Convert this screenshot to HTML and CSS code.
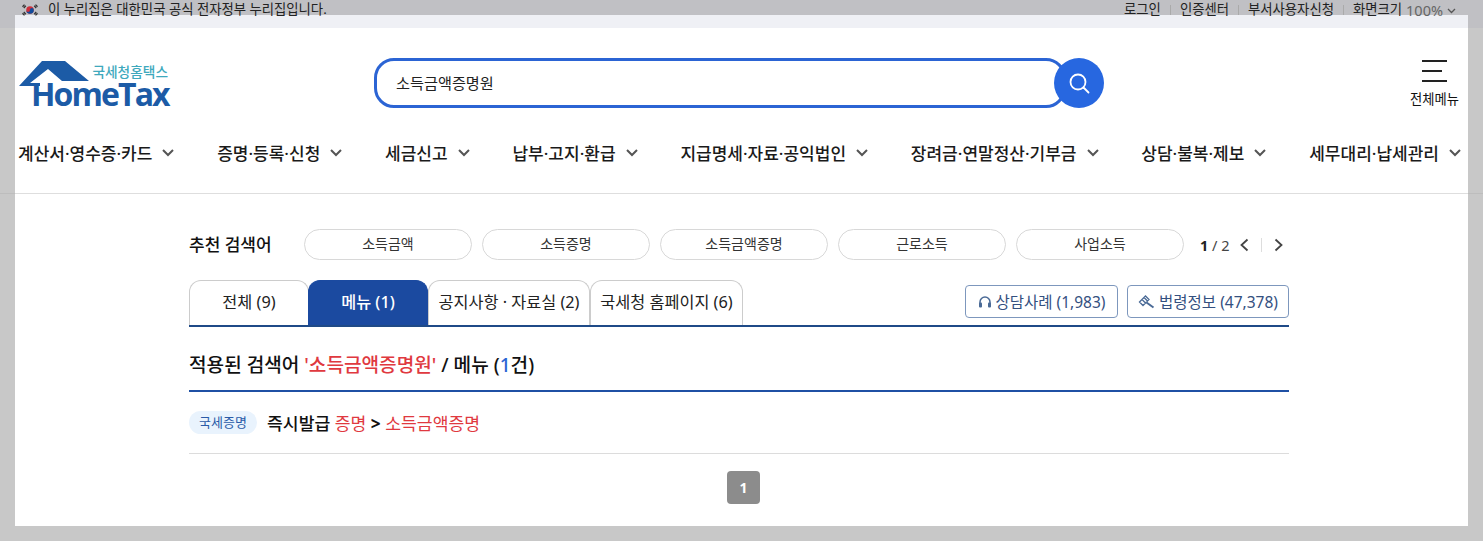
FILE: index.html
```html
<!DOCTYPE html>
<html lang="ko">
<head>
<meta charset="utf-8">
<title>HomeTax</title>
<link rel="stylesheet" href="styles.css">
</head>
<body>
<div class="gov">
  <div class="gov-left">
    <svg class="flag" width="20" height="14" viewBox="0 0 20 14"><circle cx="10" cy="7" r="3.800" fill="#cd2e3a"/><path d="M6.200 7a3.800 3.800 0 0 0 7.600 0 1.900 1.900 0 0 0-3.800 0 1.900 1.900 0 0 1-3.800 0z" fill="#0f4c9c"/><g stroke="#333" stroke-width="1.300"><path d="M2.500 3.800l2-2.200M3.800 5l2-2.200M14.200 2.800l2 2.200M15.500 1.600l2 2.200M2.500 10.200l2 2.200M3.800 9l2 2.200M14.200 11.200l2-2.200M15.500 12.400l2-2.200"/></g></svg>
    <span>이 누리집은 대한민국 공식 전자정부 누리집입니다.</span>
  </div>
  <div class="gov-right">
    <a class="gov-link">로그인</a><i class="gov-sep"></i>
    <a class="gov-link">인증센터</a><i class="gov-sep"></i>
    <a class="gov-link">부서사용자신청</a><i class="gov-sep"></i>
    <a class="gov-link">화면크기</a>
    <span class="zoom">100%<svg width="9" height="6" viewBox="0 0 9 6"><path d="M1 1l3.500 3.500L8 1" fill="none" stroke="#555" stroke-width="1.300"/></svg></span>
  </div>
</div>
<div class="window">
  <div class="strip"></div>
  <header class="head">
    <div class="logo">
      <svg class="roof" width="92" height="30" viewBox="0 0 92 30"><path d="M1 28L24 3H47L71 23H44L30 11 12 25H22V28Z" fill="#1c5ba6"/></svg>
      <span class="logo-kr">국세청홈택스</span>
      <span class="logo-en">HomeTax</span>
    </div>
    <div class="search">
      <div class="search-box">소득금액증명원</div>
      <button class="search-btn" aria-label="검색"><svg width="26" height="26" viewBox="0 0 26 26"><circle cx="12" cy="12" r="7.500" fill="none" stroke="#fff" stroke-width="1.800"/><path d="M17.500 17.500l5 5" stroke="#fff" stroke-width="1.800" stroke-linecap="round"/></svg></button>
    </div>
    <div class="all">
      <svg width="25" height="22" viewBox="0 0 25 22"><path d="M0 1h25M0 11h20M0 21h25" stroke="#222" stroke-width="2"/></svg>
      <span>전체메뉴</span>
    </div>
  </header>
  <nav class="nav">
    <a class="nav-item">계산서·영수증·카드<svg class="chev" width="12" height="8" viewBox="0 0 12 8"><path d="M1 1l5 5 5-5" fill="none" stroke="#555" stroke-width="2"/></svg></a>
    <a class="nav-item">증명·등록·신청<svg class="chev" width="12" height="8" viewBox="0 0 12 8"><path d="M1 1l5 5 5-5" fill="none" stroke="#555" stroke-width="2"/></svg></a>
    <a class="nav-item">세금신고<svg class="chev" width="12" height="8" viewBox="0 0 12 8"><path d="M1 1l5 5 5-5" fill="none" stroke="#555" stroke-width="2"/></svg></a>
    <a class="nav-item">납부·고지·환급<svg class="chev" width="12" height="8" viewBox="0 0 12 8"><path d="M1 1l5 5 5-5" fill="none" stroke="#555" stroke-width="2"/></svg></a>
    <a class="nav-item">지급명세·자료·공익법인<svg class="chev" width="12" height="8" viewBox="0 0 12 8"><path d="M1 1l5 5 5-5" fill="none" stroke="#555" stroke-width="2"/></svg></a>
    <a class="nav-item">장려금·연말정산·기부금<svg class="chev" width="12" height="8" viewBox="0 0 12 8"><path d="M1 1l5 5 5-5" fill="none" stroke="#555" stroke-width="2"/></svg></a>
    <a class="nav-item">상담·불복·제보<svg class="chev" width="12" height="8" viewBox="0 0 12 8"><path d="M1 1l5 5 5-5" fill="none" stroke="#555" stroke-width="2"/></svg></a>
    <a class="nav-item">세무대리·납세관리<svg class="chev" width="12" height="8" viewBox="0 0 12 8"><path d="M1 1l5 5 5-5" fill="none" stroke="#555" stroke-width="2"/></svg></a>
  </nav>
  <main class="content">
    <section class="rec">
      <strong class="rec-label">추천 검색어</strong>
      <div class="chips">
        <a class="chip">소득금액</a>
        <a class="chip">소득증명</a>
        <a class="chip">소득금액증명</a>
        <a class="chip">근로소득</a>
        <a class="chip">사업소득</a>
      </div>
      <div class="rec-pager">
        <span class="rec-count"><b>1</b> / 2</span>
        <svg width="12" height="14" viewBox="0 0 12 14"><path d="M9.500 1.500L3.500 7l6 5.500" fill="none" stroke="#444" stroke-width="1.800"/></svg>
        <i class="rec-sep"></i>
        <svg width="12" height="14" viewBox="0 0 12 14"><path d="M2.500 1.500l6 5.500-6 5.500" fill="none" stroke="#444" stroke-width="1.800"/></svg>
      </div>
    </section>
    <section class="tabs">
      <a class="tab t1">전체 (9)</a>
      <a class="tab t2 on">메뉴 (1)</a>
      <a class="tab t3">공지사항 · 자료실 (2)</a>
      <a class="tab t4">국세청 홈페이지 (6)</a>
      <div class="tab-btns">
        <a class="tab-btn b1"><svg width="14" height="14" viewBox="0 0 14 14"><path d="M2 10V7a5 5 0 0 1 10 0v3" fill="none" stroke="#4a6a96" stroke-width="1.500"/><rect x="1" y="7.500" width="3" height="5" rx="1" fill="#4a6a96"/><rect x="10" y="7.500" width="3" height="5" rx="1" fill="#4a6a96"/></svg>상담사례 (1,983)</a>
        <a class="tab-btn b2"><svg width="17" height="15" viewBox="0 0 17 15"><path d="M1.500 8L7.500 2l3.500 3.500-6 6zM4 5.500l3.500 3.500M6 3.500l3.500 3.500" fill="none" stroke="#4a6a96" stroke-width="1.300"/><path d="M8.500 8.500l7 5" stroke="#4a6a96" stroke-width="2"/></svg>법령정보 (47,378)</a>
      </div>
    </section>
    <h2 class="result">적용된 검색어 <em class="red">'소득금액증명원'</em> / 메뉴 (<em class="blue">1</em>건)</h2>
    <div class="row">
      <span class="badge">국세증명</span>
      <span class="path">즉시발급 <em class="red">증명</em> <b class="gt">&gt;</b> <em class="red">소득금액증명</em></span>
    </div>
    <div class="pages"><a class="page">1</a></div>
  </main>
</div>
</body>
</html>
```
FILE: styles.css
```css
* { box-sizing: border-box; }
html, body { margin: 0; height: 541px; overflow: hidden; }
body {
  font-family: "Noto Sans", "Noto Sans CJK KR", sans-serif;
  color: #111;
  background:
    linear-gradient(#c0c0c4, #c0c0c4) 0 0 / 100% 28px no-repeat,
    linear-gradient(#bdbdbd, #bdbdbd) 0 193px / 100% 1px no-repeat,
    #c8c8c8;
}
em { font-style: normal; }
i { display: block; }

.gov {
  position: relative;
  z-index: 2;
  height: 15px;
  display: flex;
  justify-content: space-between;
  padding: 0 27px 0 20px;
  font-size: 13.350px;
  line-height: 19px;
  color: #222;
}
.gov-left { display: flex; gap: 8px; }
.flag { margin-top: 3px; }
.gov-right { display: flex; align-items: flex-start; }
.gov-sep { width: 1px; height: 10px; margin: 5px 9px 0; background: #aaa; }
.zoom { display: flex; align-items: center; gap: 4px; margin-left: 4px; color: #666; font-size: 14.500px; height: 21px; }

.window { height: 511px; margin: 0 15px; background: #fff; }
.strip { height: 13px; background: #eff0f5; }

.head { display: flex; align-items: flex-start; height: 99px; padding: 30px 9px 0 3px; }
.logo { position: relative; width: 150px; height: 50px; flex: none; }
.roof { position: absolute; left: 0; top: 0; }
.logo-kr { position: absolute; right: 0; top: 6px; font-size: 13.700px; line-height: 16px; color: #3fa9bd; font-weight: 500; }
.logo-en { position: absolute; left: 13px; top: 23px; font: 700 32px/26px "Open Sans", sans-serif; letter-spacing: -1.900px; color: #1c5ba6; }

.search { display: flex; margin-left: 206px; width: 730px; height: 50px; flex: none; }
.search-box {
  flex: 1;
  margin-right: -12px;
  border: 3px solid #2b64d4;
  border-radius: 20px;
  padding-left: 19px;
  font-size: 15.200px;
  line-height: 44px;
  color: #222;
}
.search-btn { position: relative; width: 50px; height: 50px; border: 0; padding: 0; border-radius: 50%; background: #2767e0; display: flex; align-items: center; justify-content: center; }

.all { margin-left: auto; width: 49px; display: flex; flex-direction: column; align-items: center; font-size: 13.300px; line-height: 18px; padding-top: 2px; gap: 8px; white-space: nowrap; }

.nav { display: flex; height: 67px; padding: 0 7px 0 3px; justify-content: space-between; border-bottom: 1px solid #dedede; white-space: nowrap; }
.nav-item { display: flex; align-items: center; height: 51px; gap: 10px; font-size: 17px; font-weight: 500; color: #1a1a1a; }

.content { width: 1100px; margin-left: 174px; }
.rec { display: flex; align-items: center; height: 31px; margin-top: 35px; }
.rec-label { width: 115px; flex: none; font-size: 17px; font-weight: 500; line-height: 30px; }
.chips { display: flex; gap: 10px; }
.chip { width: 168px; height: 31px; border: 1px solid #d8d8d8; border-radius: 16px; text-align: center; font-size: 14px; line-height: 27px; color: #333; }
.rec-pager { display: flex; align-items: center; margin-left: 16px; font-size: 14.500px; color: #444; }
.rec-count { margin-right: 8px; }
.rec-count b { color: #222; }
.rec-sep { width: 1px; height: 14px; margin: 0 11px; background: #ddd; }

.tabs { display: flex; height: 47px; margin-top: 20px; border-bottom: 2px solid #1f4a87; }
.tab { height: 45px; border: 1px solid #ccc; border-bottom: 0; border-radius: 12px 12px 0 0; text-align: center; font-size: 16.300px; line-height: 43px; color: #222; background: #fff; white-space: nowrap; }
.t1 { width: 120px; }
.t2 { width: 120px; margin-left: -1px; }
.t3 { width: 162px; }
.t4 { width: 153px; }
.tab.on { background: #1b4aa0; border-color: #1b4aa0; color: #fff; font-weight: 500; }
.tab-btns { display: flex; gap: 9px; margin-left: auto; padding-top: 5px; }
.tab-btn { display: flex; align-items: center; justify-content: center; gap: 4px; height: 33px; border: 1px solid #7d97bd; border-radius: 4px; font-size: 15.500px; color: #34507f; white-space: nowrap; }
.b1 { width: 153px; }
.b2 { width: 162px; }

.result { height: 65px; margin: 0; border-bottom: 2px solid #1f50a4; font-size: 19.100px; font-weight: 500; line-height: 76px; color: #111; }
.red { color: #e0393f; }
.blue { color: #2b64d4; }

.row { display: flex; align-items: center; gap: 10px; height: 62px; padding-bottom: 1px; border-bottom: 1px solid #dcdcdc; }
.badge { width: 68px; height: 23px; border-radius: 12px; background: #e9f3fd; text-align: center; font-size: 13px; line-height: 23px; color: #2a5ba8; }
.path { font-size: 17.200px; font-weight: 500; color: #111; }
.path .red { font-weight: 400; }
.gt { font-weight: 700; }

.pages { display: flex; justify-content: center; padding: 17px 0 0 9px; }
.page { width: 33px; height: 33px; border-radius: 4px; background: #8c8c8c; color: #fff; text-align: center; font-size: 14px; font-weight: 700; line-height: 33px; }
```
